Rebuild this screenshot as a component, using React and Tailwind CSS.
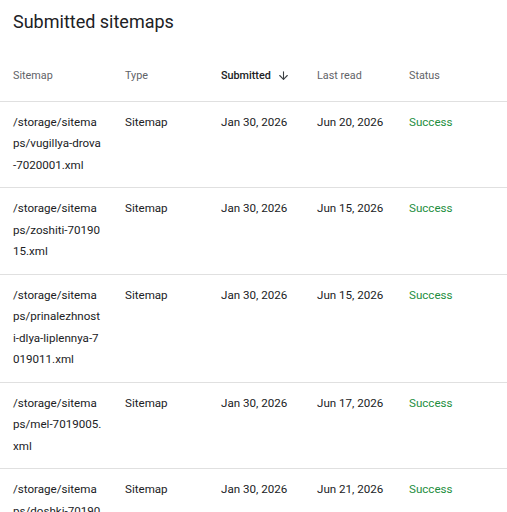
import { ArrowDown } from "lucide-react";

const rows = [
  { path: "/storage/sitemaps/vugillya-drova-7020001.xml", read: "Jun 20, 2026" },
  { path: "/storage/sitemaps/zoshiti-7019015.xml", read: "Jun 15, 2026" },
  { path: "/storage/sitemaps/prinalezhnosti-dlya-liplennya-7019011.xml", read: "Jun 15, 2026" },
  { path: "/storage/sitemaps/mel-7019005.xml", read: "Jun 17, 2026" },
  { path: "/storage/sitemaps/doshki-7019010.xml", read: "Jun 21, 2026" },
];

export default function App() {
  return (
    <div className="w-[507px] h-[512px] overflow-hidden bg-white text-[#202124] font-['Roboto',sans-serif]">
      <h2 className="pl-[13px] pt-[10px] text-[18px] leading-[24px] font-normal">Submitted sitemaps</h2>
      <table className="w-full table-fixed border-collapse mt-[17px]">
        <colgroup>
          <col className="w-[125px]" />
          <col className="w-[96px]" />
          <col className="w-[96px]" />
          <col className="w-[92px]" />
          <col />
        </colgroup>
        <thead>
          <tr className="h-[50px] border-b border-[#e0e0e0] text-[10.8px] text-[#5f6368] text-left">
            <th className="pl-[13px] font-normal">Sitemap</th>
            <th className="font-normal">Type</th>
            <th className="font-medium text-[#202124]">
              <span className="flex items-center gap-[6px]">
                Submitted
                <ArrowDown size={13} strokeWidth={2} className="text-[#3c4043]" />
              </span>
            </th>
            <th className="font-normal">Last read</th>
            <th className="font-normal">Status</th>
          </tr>
        </thead>
        <tbody className="text-[11.6px] leading-[21.5px]">
          {rows.map((r) => (
            <tr key={r.path} className="border-b border-[#e0e0e0] align-top">
              <td className="pl-[13px] pr-[23px] pt-[10px] pb-[11px] break-all">{r.path}</td>
              <td className="pt-[10px]">Sitemap</td>
              <td className="pt-[10px]">Jan 30, 2026</td>
              <td className="pt-[10px]">{r.read}</td>
              <td className="pt-[10px] text-[#1e8e3e]">Success</td>
            </tr>
          ))}
        </tbody>
      </table>
    </div>
  );
}
